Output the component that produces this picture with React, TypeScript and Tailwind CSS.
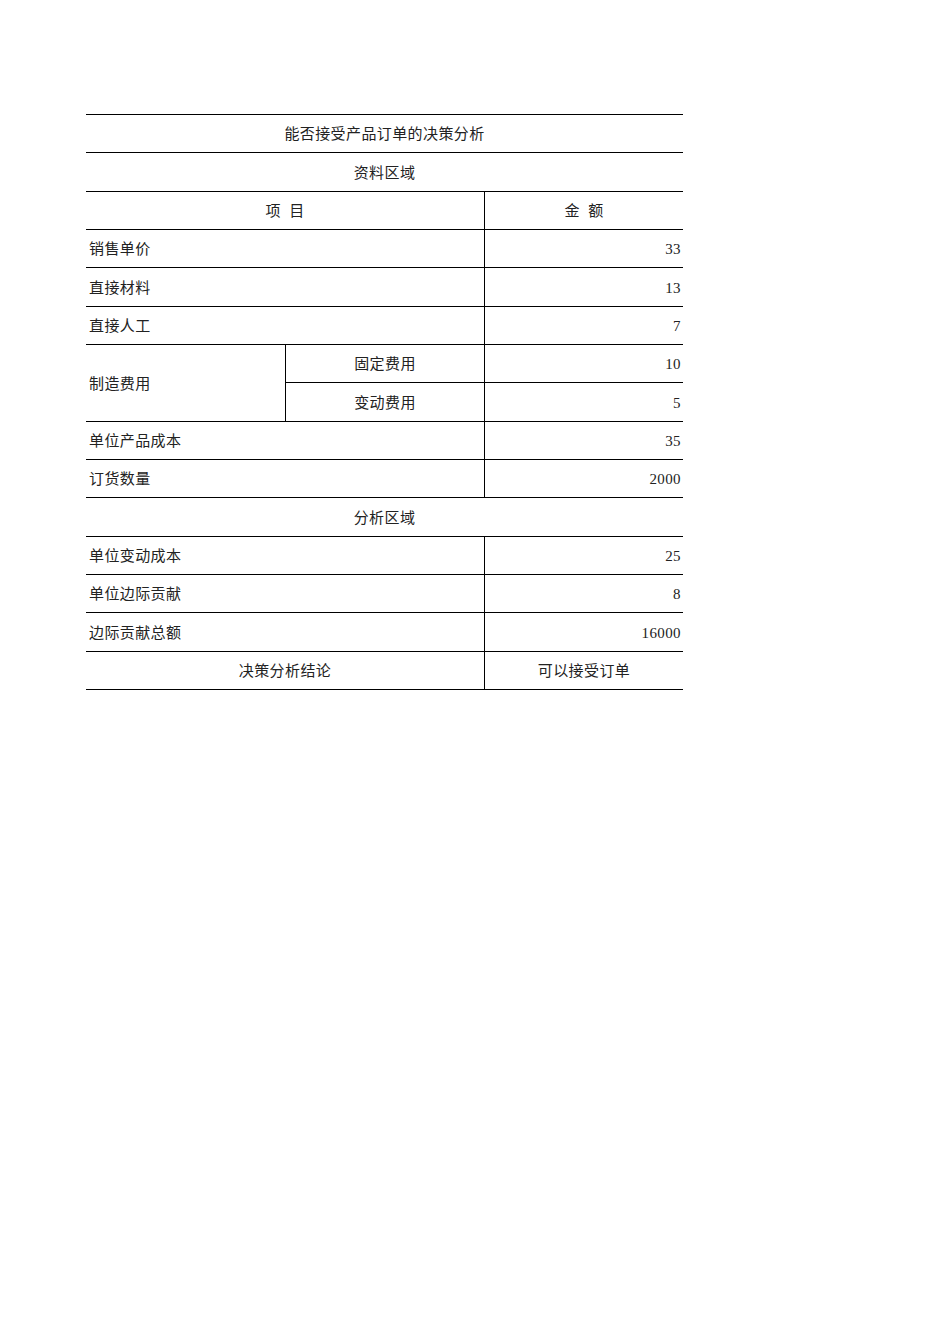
const FONT = { fontFamily: '"Liberation Serif", "Noto Sans CJK SC", serif' };

type Row = { label: string; value: string };

const dataRows: Row[] = [
  { label: '销售单价', value: '33' },
  { label: '直接材料', value: '13' },
  { label: '直接人工', value: '7' },
];

const costRows: Row[] = [
  { label: '单位产品成本', value: '35' },
  { label: '订货数量', value: '2000' },
];

const analysisRows: Row[] = [
  { label: '单位变动成本', value: '25' },
  { label: '单位边际贡献', value: '8' },
  { label: '边际贡献总额', value: '16000' },
];

const cell = 'flex items-center border-b border-black pt-[2px]';

function LabelRow({ label, value }: Row) {
  return (
    <>
      <div className={`${cell} col-span-2 pl-[3px]`}>{label}</div>
      <div className={`${cell} justify-end border-l pr-[2px]`}>{value}</div>
    </>
  );
}

export default function App() {
  return (
    <div className="min-h-[1344px] w-[950px] bg-white pl-[86px] pt-[114px] text-[15px] tracking-[0.4px] text-[#222]" style={FONT}>
      <div className="grid w-[597px] grid-cols-[199px_199px_199px] auto-rows-[38.33px] border-t border-black">
        <div className={`${cell} col-span-3 justify-center`}>能否接受产品订单的决策分析</div>
        <div className={`${cell} col-span-3 justify-center`}>资料区域</div>
        <div className={`${cell} col-span-2 justify-center whitespace-pre`}>项  目</div>
        <div className={`${cell} justify-center border-l whitespace-pre`}>金  额</div>
        {dataRows.map((r) => (
          <LabelRow key={r.label} {...r} />
        ))}
        <div className={`${cell} row-span-2 pl-[3px]`}>制造费用</div>
        <div className={`${cell} justify-center border-l`}>固定费用</div>
        <div className={`${cell} justify-end border-l pr-[2px]`}>10</div>
        <div className={`${cell} justify-center border-l`}>变动费用</div>
        <div className={`${cell} justify-end border-l pr-[2px]`}>5</div>
        {costRows.map((r) => (
          <LabelRow key={r.label} {...r} />
        ))}
        <div className={`${cell} col-span-3 justify-center`}>分析区域</div>
        {analysisRows.map((r) => (
          <LabelRow key={r.label} {...r} />
        ))}
        <div className={`${cell} col-span-2 justify-center`}>决策分析结论</div>
        <div className={`${cell} justify-center border-l`}>可以接受订单</div>
      </div>
    </div>
  );
}
